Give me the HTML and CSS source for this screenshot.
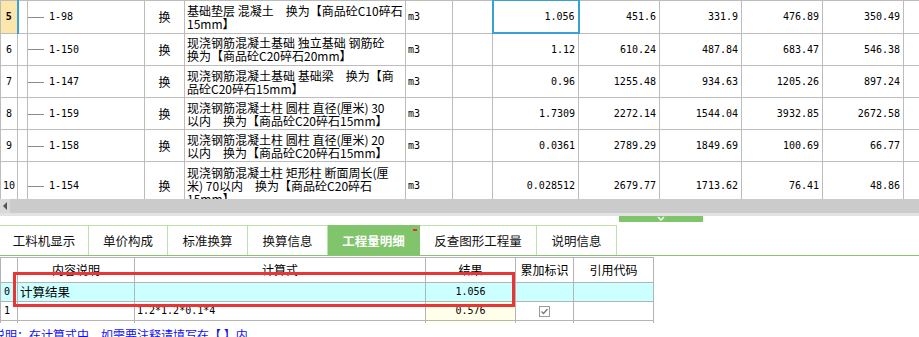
FILE: index.html
```html
<!DOCTYPE html>
<html lang="zh-CN">
<head>
    <meta charset="UTF-8">
    <title>工程量明细</title>
    <link rel="stylesheet" href="styles.css">
</head>
<body>
    <div class="grid-wrap">
        <table class="grid">
            <colgroup>
                <col style="width:17px"><col style="width:10px"><col style="width:117px"><col style="width:40px">
                <col style="width:221px"><col style="width:47px"><col style="width:40px"><col style="width:86px">
                <col style="width:81px"><col style="width:82px"><col style="width:81px"><col style="width:81px"><col style="width:16px">
            </colgroup>
            <tr>
                <td class="rh cur">5</td><td></td>
                <td class="code"><span class="tree"></span>1-98</td><td class="ch">换</td>
                <td class="desc">基础垫层 混凝土　换为【商品砼C10碎石<br>15mm】</td>
                <td class="unit">m3</td><td></td>
                <td class="n sel">1.056</td><td class="n">451.6</td><td class="n">331.9</td><td class="n">476.89</td><td class="n">350.49</td><td></td>
            </tr>
            <tr>
                <td class="rh">6</td><td></td>
                <td class="code"><span class="tree"></span>1-150</td><td class="ch">换</td>
                <td class="desc">现浇钢筋混凝土基础 独立基础 钢筋砼<br>换为【商品砼C20碎石20mm】</td>
                <td class="unit">m3</td><td></td>
                <td class="n">1.12</td><td class="n">610.24</td><td class="n">487.84</td><td class="n">683.47</td><td class="n">546.38</td><td></td>
            </tr>
            <tr>
                <td class="rh">7</td><td></td>
                <td class="code"><span class="tree"></span>1-147</td><td class="ch">换</td>
                <td class="desc">现浇钢筋混凝土基础 基础梁　换为【商<br>品砼C20碎石15mm】</td>
                <td class="unit">m3</td><td></td>
                <td class="n">0.96</td><td class="n">1255.48</td><td class="n">934.63</td><td class="n">1205.26</td><td class="n">897.24</td><td></td>
            </tr>
            <tr>
                <td class="rh">8</td><td></td>
                <td class="code"><span class="tree"></span>1-159</td><td class="ch">换</td>
                <td class="desc">现浇钢筋混凝土柱 圆柱 直径(厘米) 30<br>以内　换为【商品砼C20碎石15mm】</td>
                <td class="unit">m3</td><td></td>
                <td class="n">1.7309</td><td class="n">2272.14</td><td class="n">1544.04</td><td class="n">3932.85</td><td class="n">2672.58</td><td></td>
            </tr>
            <tr>
                <td class="rh">9</td><td></td>
                <td class="code"><span class="tree"></span>1-158</td><td class="ch">换</td>
                <td class="desc">现浇钢筋混凝土柱 圆柱 直径(厘米) 20<br>以内　换为【商品砼C20碎石15mm】</td>
                <td class="unit">m3</td><td></td>
                <td class="n">0.0361</td><td class="n">2789.29</td><td class="n">1849.69</td><td class="n">100.69</td><td class="n">66.77</td><td></td>
            </tr>
            <tr class="tall">
                <td class="rh">10</td><td></td>
                <td class="code"><span class="tree"></span>1-154</td><td class="ch">换</td>
                <td class="desc">现浇钢筋混凝土柱 矩形柱 断面周长(厘<br>米) 70以内　换为【商品砼C20碎石<br>15mm】</td>
                <td class="unit">m3</td><td></td>
                <td class="n">0.028512</td><td class="n">2679.77</td><td class="n">1713.62</td><td class="n">76.41</td><td class="n">48.86</td><td></td>
            </tr>
        </table>
    </div>

    <div class="hscroll">
        <div class="arrow"><span class="tri"></span></div>
    </div>

    <div class="splitter">
        <div class="handle">
            <svg width="10" height="6" viewBox="0 0 10 6"><polyline points="2,1 5,4 8,1" fill="none" stroke="#ffffff" stroke-width="1.5"/></svg>
        </div>
    </div>

    <div class="tabs">
        <div class="tab t1">工料机显示</div>
        <div class="tab t2">单价构成</div>
        <div class="tab t3">标准换算</div>
        <div class="tab t4">换算信息</div>
        <div class="tab t5 on">工程量明细</div>
        <div class="tab t6">反查图形工程量</div>
        <div class="tab t7">说明信息</div>
    </div>

    <div class="detail">
        <table class="qty">
            <colgroup>
                <col style="width:17px"><col style="width:117px"><col style="width:291px">
                <col style="width:90px"><col style="width:58px"><col style="width:80px">
            </colgroup>
            <tr class="head">
                <td></td><td>内容说明</td><td>计算式</td><td>结果</td><td>累加标识</td><td>引用代码</td>
            </tr>
            <tr class="total">
                <td class="idx">0</td><td class="txt">计算结果</td><td></td><td class="res">1.056</td><td></td><td></td>
            </tr>
            <tr>
                <td class="idx">1</td><td></td><td class="expr">1.2*1.2*0.1*4</td><td class="res pale">0.576</td>
                <td class="chk"><svg width="11" height="11" viewBox="0 0 11 11"><rect x="0.5" y="0.5" width="10" height="10" fill="#fff" stroke="#9a9a9a"/><polyline points="2.5,5.5 4.5,7.5 8.5,3" fill="none" stroke="#777" stroke-width="1.3"/></svg></td>
                <td></td>
            </tr>
            <tr class="stub">
                <td></td><td></td><td></td><td class="pale"></td><td></td><td></td>
            </tr>
        </table>
        <div class="mark"></div>
        <div class="hint">说明：在计算式中，如需要注释请填写在【 】内</div>
    </div>
</body>
</html>
```

FILE: styles.css
```css
body {
    margin: 0;
    width: 919px;
    height: 337px;
    overflow: hidden;
    background: #ffffff;
    font-family: "Noto Sans CJK SC", sans-serif;
    font-size: 12px;
    color: #000;
}
.grid-wrap {
    height: 199px;
    overflow: hidden;
}
.grid {
    border-collapse: collapse;
    table-layout: fixed;
    width: 919px;
    margin-top: -1px;
}
.grid td {
    border: 1px solid #bcbcbc;
    padding: 0 2px;
    height: 31px;
    line-height: 13px;
    white-space: nowrap;
    overflow: hidden;
    vertical-align: middle;
}
.grid .tall td {
    height: 47px;
}
.grid .rh {
    text-align: center;
    padding: 0;
    font-family: "DejaVu Sans Mono", monospace;
    font-size: 10px;
}
.grid .rh.cur {
    background: #fce6ab;
    font-weight: bold;
    border-right: 2px solid #3aa0d8;
}
.grid .code {
    font-family: "DejaVu Sans Mono", monospace;
    font-size: 10px;
    padding-left: 0;
}
.tree {
    display: inline-block;
    width: 16px;
    height: 1px;
    background: #8a8a8a;
    vertical-align: middle;
    margin-right: 5px;
}
.grid .ch {
    text-align: center;
}
.grid .desc {
    font-size: 12px;
}
.grid .unit {
    font-family: "DejaVu Sans Mono", monospace;
    font-size: 10px;
}
.grid .n {
    text-align: right;
    font-family: "DejaVu Sans Mono", monospace;
    font-size: 10px;
    padding-right: 3px;
}
.grid .sel {
    border: 2px solid #3aa0d8;
}
.hscroll {
    height: 14px;
    background: #cbcbcb;
    display: flex;
}
.arrow {
    width: 10px;
    background: #d9d9d9;
    display: flex;
    align-items: center;
    justify-content: center;
}
.tri {
    width: 0;
    height: 0;
    border-top: 4px solid transparent;
    border-bottom: 4px solid transparent;
    border-right: 4px solid #555;
}
.splitter {
    border-top: 3px solid #e2e2e2;
    padding-bottom: 3px;
}
.handle {
    margin-left: 619px;
    width: 84px;
    height: 6px;
    background: #80c46c;
    display: flex;
    justify-content: center;
    align-items: flex-start;
}
.handle svg {
    display: block;
}
.tabs {
    display: flex;
    border-bottom: 1px solid #88c474;
}
.tab {
    position: relative;
    box-sizing: border-box;
    height: 30px;
    border-top: 1px solid #bfe0aa;
    border-right: 1px solid #bfe0aa;
    display: flex;
    align-items: center;
    justify-content: center;
    font-size: 12.5px;
    color: #111;
}
.t1 { width: 89px; }
.t2 { width: 79px; }
.t3 { width: 80px; }
.t4 { width: 80px; }
.t5 { width: 92px; }
.t6 { width: 117px; }
.t7 { width: 80px; }
.tab.on {
    background: #80c46c;
    border-color: #80c46c;
    color: #ffffff;
    font-weight: bold;
}
.tab.on::after {
    content: "";
    position: absolute;
    right: 2px;
    top: 3px;
    width: 4px;
    height: 2px;
    background: #f02828;
}
.detail {
    position: relative;
    margin-top: 1px;
}
.qty {
    border-collapse: collapse;
    table-layout: fixed;
    width: 653px;
}
.qty td {
    border: 1px solid #b4b4b4;
    height: 18px;
    padding: 0 2px;
    white-space: nowrap;
    overflow: hidden;
    line-height: 14px;
    vertical-align: middle;
}
.qty .head td {
    height: 24px;
    text-align: center;
}
.qty .total td {
    background: #ccffff;
}
.qty .idx {
    padding: 0 3px;
    font-family: "DejaVu Sans Mono", monospace;
    font-size: 10px;
}
.qty .txt {
    font-size: 12.5px;
}
.qty .res {
    text-align: center;
    font-family: "DejaVu Sans Mono", monospace;
    font-size: 10px;
}
.qty .expr {
    font-family: "DejaVu Sans Mono", monospace;
    font-size: 10px;
}
.qty .pale {
    background: #ffffea;
}
.qty .chk {
    text-align: center;
    line-height: 0;
}
.qty .stub td {
    height: 2px;
    border-bottom: none;
    line-height: 0;
}
.mark {
    position: absolute;
    left: 13px;
    top: 15px;
    width: 502px;
    height: 35px;
    box-sizing: border-box;
    border: 3px solid #e83535;
}
.hint {
    margin-left: -7px;
    margin-top: 5px;
    line-height: 14px;
    color: #1010ee;
    font-size: 12px;
    white-space: nowrap;
}
```
